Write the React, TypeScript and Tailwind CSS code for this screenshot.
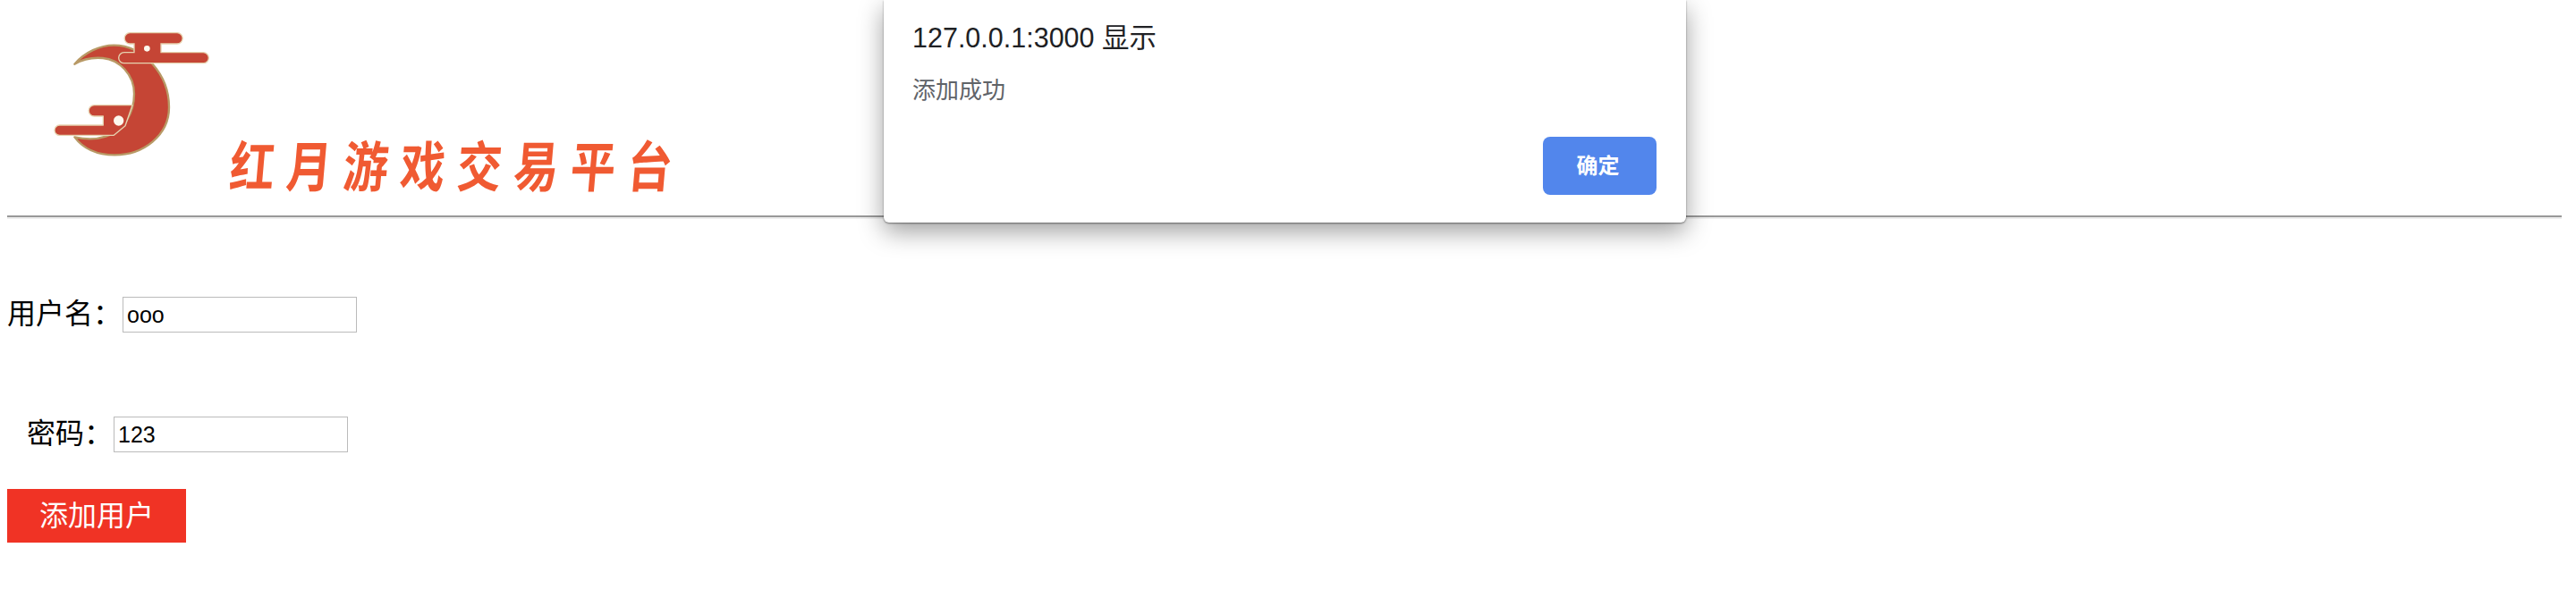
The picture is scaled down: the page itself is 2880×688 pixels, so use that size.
import React from 'react';

const Logo = () => (
  <svg viewBox="0 0 660 510" className="w-[220px] h-[170px] shrink-0">
    {/* crescent */}
    <path
      d="M130 155 C165 115 215 92 262 92 C360 92 447 190 447 300 C447 395 360 460 265 460 C205 460 160 440 130 400 C165 408 205 408 235 398 C295 380 330 320 330 255 C330 190 280 140 225 135 C190 132 155 140 130 155 Z"
      fill="#c54535"
      stroke="#b89a66"
      strokeWidth="7"
      strokeLinejoin="round"
    />
    {/* upper cloud */}
    <path
      d="M316 50 H474 A18 18 0 0 1 474 87 H420 V116 H562 A18 18 0 0 1 562 152 H296 A18 18 0 0 1 296 116 H330 V87 H316 A18 18 0 0 1 316 50 Z"
      fill="#c54535"
      stroke="#e6d3b0"
      strokeWidth="4"
    />
    <circle cx="373" cy="103" r="10" fill="#fdf8ee" />
    {/* lower cloud */}
    <path
      d="M196 293 H324 L300 362 L262 394 H80 A17 17 0 0 1 80 360 H226 V330 H196 A18 18 0 0 1 196 293 Z"
      fill="#c54535"
      stroke="#e6d3b0"
      strokeWidth="4"
      strokeLinejoin="round"
    />
    <circle cx="278" cy="345" r="17" fill="#fdf8ee" />
  </svg>
);

const Field = ({ label, value, className }: { label: string; value: string; className: string }) => (
  <div className={`flex items-center ${className}`}>
    <label className="-mt-0.5 text-[32px] leading-[40px] text-black">{label}</label>
    <input
      readOnly
      value={value}
      className="ml-px w-[262px] h-[40px] border border-[#bbbbbb] bg-white px-1 text-[25px] text-black outline-none font-['Liberation_Sans',sans-serif]"
    />
  </div>
);

const App: React.FC = () => {
  return (
    <div
      lang="zh-CN"
      className="relative h-[688px] overflow-hidden bg-white px-2 font-['Liberation_Sans','Noto_Sans_CJK_SC',sans-serif]"
    >
      <header className="flex items-start pl-8 pt-5">
        <Logo />
        <h1 className="mt-[138px] -ml-[3px] origin-left scale-y-[1.22] -skew-x-6 whitespace-nowrap text-[50px] leading-[60px] font-bold tracking-[13.5px] text-[#f05a32]">
          红月游戏交易平台
        </h1>
      </header>
      <hr className="mt-[23px] mr-2 h-1 border-t-2 border-b-2 border-t-[#999999] border-b-[#eeeeee]" />

      <form>
        <Field label="用户名：" value="ooo" className="mt-[87px]" />
        <Field label="密码：" value="123" className="mt-[94px] ml-[22px]" />
        <button
          type="button"
          className="mt-[41px] block h-[60px] w-[200px] bg-[#f03325] text-[32px] text-white"
        >
          添加用户
        </button>
      </form>

      {/* browser alert */}
      <div className="absolute left-[988px] top-0 h-[249px] w-[897px] rounded-b-md bg-white shadow-[0_10px_28px_rgba(0,0,0,0.38),0_1px_2px_rgba(0,0,0,0.45)]">
        <div className="pl-8 pt-[24px] text-[30.5px] leading-[36px] text-[#202124]">127.0.0.1:3000 显示</div>
        <div className="pl-8 pt-[23px] text-[26px] leading-[36px] text-[#5f6368]">添加成功</div>
        <div className="mt-[34px] flex justify-end pr-[33px]">
          <button
            type="button"
            className="h-[65px] w-[127px] rounded-lg bg-[#5286ec] pr-1 text-[24px] font-bold text-white"
          >
            确定
          </button>
        </div>
      </div>
    </div>
  );
};

export default App;
